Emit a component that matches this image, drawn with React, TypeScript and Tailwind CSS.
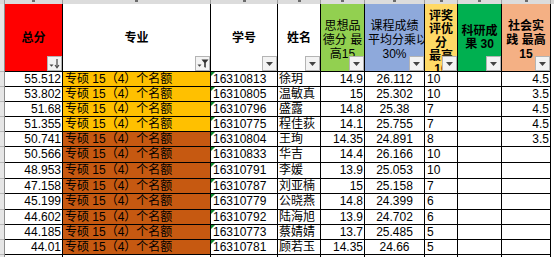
import React from 'react';

// 表格数据：总分, 学号, 姓名, 思想品德, 课程成绩, 评奖评优, 社会实践, 专业底色
const rows = [
    ['55.512', '16310813', '徐玥', '14.9', '26.112', '10', '4.5', 'y'],
    ['53.802', '16310805', '温敏真', '15', '25.302', '10', '3.5', 'y'],
    ['51.68', '16310796', '盛露', '14.8', '25.38', '7', '4.5', 'y'],
    ['51.355', '16310775', '程佳荻', '14.1', '25.755', '7', '4.5', 'y'],
    ['50.741', '16310804', '王珣', '14.35', '24.891', '8', '3.5', 'o'],
    ['50.566', '16310833', '华吉', '14.4', '26.166', '10', '', 'o'],
    ['48.953', '16310791', '李媛', '13.9', '25.053', '10', '', 'o'],
    ['47.158', '16310787', '刘亚楠', '15', '25.158', '7', '', 'o'],
    ['45.199', '16310779', '公晓燕', '14.8', '24.399', '6', '', 'o'],
    ['44.602', '16310792', '陆海旭', '13.9', '24.702', '6', '', 'o'],
    ['44.185', '16310773', '蔡婧婧', '13.7', '25.485', '5', '', 'o'],
    ['44.01', '16310781', '顾若玉', '14.35', '24.66', '5', '', 'o'],
];

const COLS = 'grid-cols-[57px_147px_66px_42px_43px_59px_32px_43px_48px]';
const ROWS = 'grid-rows-[67px_14px_14px_14px_14px_14px_15px_15px_14px_15px_14px_14px_14px_14px]';

function FilterButton({ kind = 'drop' }: { kind?: 'drop' | 'sort' | 'filter' }) {
    return (
        <div className="absolute bottom-0 right-0 w-[15px] h-[15px] bg-[#f3f3f3] border border-[#b4b4b4] flex items-center justify-center">
            <svg width="13" height="13" viewBox="0 0 13 13">
                {kind === 'drop' && <path d="M3 5h7l-3.5 4z" fill="#444" />}
                {kind === 'sort' && (
                    <>
                        <path d="M1.5 7.5h4l-2 2.2z" fill="#444" />
                        <path d="M9 2v8" stroke="#444" strokeWidth="1.2" />
                        <path d="M7 8l2 2.8 2-2.8" stroke="#444" strokeWidth="1.1" fill="none" />
                    </>
                )}
                {kind === 'filter' && (
                    <>
                        <path d="M1.5 7.5h4l-2 2.2z" fill="#444" />
                        <path d="M5.5 2.5h7l-2.7 3.2v5l-1.6-0.8v-4.2z" fill="#333" />
                    </>
                )}
            </svg>
        </div>
    );
}

function Head({ bg, children, bold = true, kind, className = 'justify-center items-center' }: { bg: string; children: React.ReactNode; bold?: boolean; kind?: 'drop' | 'sort' | 'filter'; className?: string }) {
    return (
        <div className={`relative overflow-hidden flex flex-col text-center text-[12px] text-black whitespace-nowrap ${bold ? 'font-bold' : 'font-normal'} ${bg} ${className}`}>
            {children}
            <FilterButton kind={kind} />
        </div>
    );
}

export default function App() {
    return (
        <div className="w-[554px] h-[257px] overflow-hidden bg-white font-['Liberation_Sans','Noto_Sans_CJK_SC',sans-serif] select-none">
            {/* 列标题条（被截掉的部分） */}
            <div className="flex h-[4px] bg-[#d9d9d9]">
                <div className="w-[5px] shrink-0 bg-[#d9d9d9] border-r border-[#9e9e9e]" />
                <div className={`grid ${COLS} gap-x-px bg-[#9e9e9e] border-r border-[#9e9e9e]`}>
                    {Array.from({ length: 9 }).map((_, i) => (
                        <div key={i} className="bg-[#dcdcdc] flex justify-center">
                            <div className="w-[3px] h-[2px] bg-[#6b6b6b]" />
                        </div>
                    ))}
                </div>
            </div>

            <div className="flex">
                {/* 行号条 */}
                <div className={`w-[5px] shrink-0 grid ${ROWS} gap-y-px bg-[#b8b8b8] border-r border-[#8f8f8f]`}>
                    {Array.from({ length: 14 }).map((_, i) => (
                        <div key={i} className="bg-[#e6e6e6]" />
                    ))}
                </div>

                <div className={`grid ${COLS} ${ROWS} gap-px bg-black border-r border-b border-black`}>
                    <Head bg="bg-[#ff0000]" kind="sort">总分</Head>
                    <Head bg="bg-white" kind="filter">专业</Head>
                    <Head bg="bg-white">学号</Head>
                    <Head bg="bg-white">姓名</Head>
                    <Head bg="bg-[#92d050]" bold={false} className="justify-center items-center leading-[14px] pt-[4px]">
                        <span>思想品</span>
                        <span>德分 最</span>
                        <span>高15</span>
                    </Head>
                    <Head bg="bg-[#8ea9db]" bold={false} className="justify-center items-start leading-[14px] pt-[4px] pl-[3px]">
                        <span className="w-[53px] text-center">课程成绩</span>
                        <span>平均分乘以</span>
                        <span className="w-[53px] text-center">30%</span>
                    </Head>
                    <Head bg="bg-[#ffd966]" className="justify-start items-center leading-[13.3px] pt-[6px]">
                        <span>评奖</span>
                        <span>评优</span>
                        <span>分</span>
                        <span>最高</span>
                        <span>10</span>
                    </Head>
                    <Head bg="bg-[#00b050]" className="justify-center items-center leading-[13px]">
                        <span>科研成</span>
                        <span>果 30</span>
                    </Head>
                    <Head bg="bg-[#f4b084]" className="justify-center items-center leading-[14px] pt-[4px]">
                        <span>社会实</span>
                        <span>践 最高</span>
                        <span>15</span>
                    </Head>

                    {rows.map((r) => (
                        <React.Fragment key={r[1]}>
                            <div className="bg-white text-right pr-[1px] text-[12px] leading-[14px]">{r[0]}</div>
                            <div className={`${r[7] === 'y' ? 'bg-[#ffc000]' : 'bg-[#c65911]'} pl-[2px] text-[12px] leading-[14px] whitespace-nowrap`}>专硕 15（4）个名额</div>
                            <div className="relative bg-white pl-[2px] text-[12px] leading-[14px]">
                                <div className="absolute top-0 left-0 w-0 h-0 border-t-[4px] border-r-[4px] border-t-[#0b8a2e] border-r-transparent" />
                                {r[1]}
                            </div>
                            <div className="bg-white pl-[1px] text-[12px] leading-[14px] whitespace-nowrap overflow-hidden">{r[2]}</div>
                            <div className="bg-white text-right pr-[1px] text-[12px] leading-[14px]">{r[3]}</div>
                            <div className="bg-white text-center text-[12px] leading-[14px]">{r[4]}</div>
                            <div className="bg-white pl-[2px] text-[12px] leading-[14px]">{r[5]}</div>
                            <div className="bg-white" />
                            <div className="bg-white text-right pr-[1px] text-[12px] leading-[14px]">{r[6]}</div>
                        </React.Fragment>
                    ))}
                    {Array.from({ length: 9 }).map((_, i) => (
                        <div key={`e${i}`} className="bg-white" />
                    ))}
                </div>
            </div>
        </div>
    );
}
